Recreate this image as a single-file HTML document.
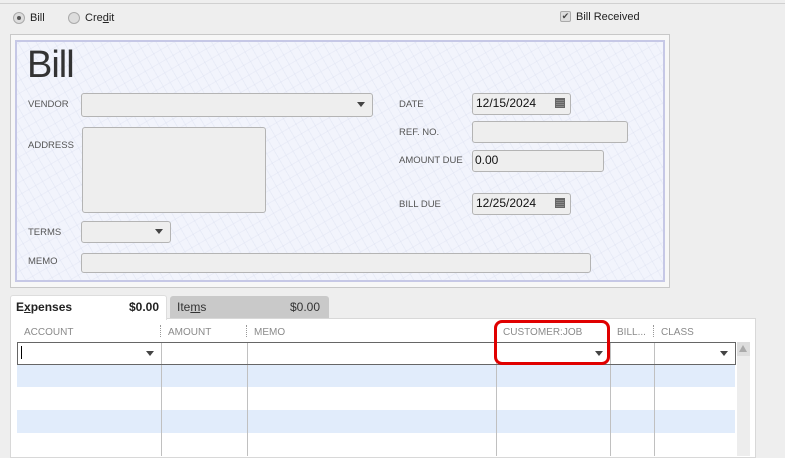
<!DOCTYPE html>
<html><head><meta charset="utf-8"><style>
*{box-sizing:border-box;margin:0;padding:0}
body{width:785px;height:456px;overflow:hidden;background:#eeeeee;font-family:"Liberation Sans",Arial,sans-serif;position:relative;color:#333}
.a{position:absolute}
.lbl{position:absolute;font-size:9.5px;color:#555}
.fld{position:absolute;background:#eeeeee;border:1px solid #b4b4b4;border-radius:3px}
.arr{position:absolute;width:0;height:0;border-left:4.5px solid transparent;border-right:4.5px solid transparent;border-top:5px solid #444}
.cal{position:absolute;width:10px;height:10px;background:#777;border:1px solid #666;background-image:repeating-linear-gradient(0deg,#888 0 1px,#666 1px 2px),repeating-linear-gradient(90deg,#888 0 1px,transparent 1px 2px)}
.hd{position:absolute;top:327px;font-size:10px;color:#8a8a8a}
.dots{position:absolute;top:325px;width:1px;height:12px;border-left:1px dotted #999}
.vl{position:absolute;top:342px;height:114px;width:1px;background:#c0c0c0}
.row{position:absolute;left:17px;width:718px;height:23px}
</style></head><body>
<div class="a" style="left:0;top:3px;width:785px;height:1px;background:#d0d0d0"></div>
<div class="a" style="left:13px;top:12px;width:12px;height:12px;border-radius:50%;background:#ddd;border:1px solid #aaa"></div>
<div class="a" style="left:17px;top:16px;width:4px;height:4px;border-radius:50%;background:#555"></div>
<div class="a" style="left:30px;top:12px;font-size:11px;color:#222">Bill</div>
<div class="a" style="left:68px;top:12px;width:12px;height:12px;border-radius:50%;background:#ddd;border:1px solid #aaa"></div>
<div class="a" style="left:85px;top:12px;font-size:11px;color:#222">Cre<u>d</u>it</div>
<div class="a" style="left:560px;top:11px;width:11px;height:11px;background:#ddd;border:1px solid #aaa;border-radius:2px;font-size:9px;line-height:9px;text-align:center;color:#444">✔</div>
<div class="a" style="left:576px;top:11px;font-size:11px;color:#222">Bill Received</div>
<div class="a" style="left:10px;top:34px;width:660px;height:254px;background:#f7f7f7;border:1px solid #c8c8c8"></div>
<div class="a" style="left:15px;top:40px;width:650px;height:242px;border:2px solid #c6c8e6;background-color:#f2f4fc;background-image:repeating-linear-gradient(60deg,transparent 0 7px,rgba(215,220,238,.35) 7px 8px),repeating-linear-gradient(-30deg,transparent 0 10px,rgba(215,220,238,.3) 10px 11px)"></div>
<div class="a" style="left:27px;top:44px;font-size:38px;color:#333;letter-spacing:-1px">Bill</div>
<div class="lbl" style="left:28px;top:99px">VENDOR</div>
<div class="fld" style="left:81px;top:93px;width:292px;height:24px"></div><div class="arr" style="left:357px;top:102px"></div>
<div class="lbl" style="left:28px;top:140px">ADDRESS</div>
<div class="fld" style="left:82px;top:127px;width:184px;height:86px"></div>
<div class="lbl" style="left:28px;top:227px">TERMS</div>
<div class="fld" style="left:81px;top:221px;width:90px;height:22px"></div><div class="arr" style="left:155px;top:229px"></div>
<div class="lbl" style="left:28px;top:256px">MEMO</div>
<div class="fld" style="left:81px;top:253px;width:510px;height:20px"></div>
<div class="lbl" style="left:399px;top:99px">DATE</div>
<div class="fld" style="left:472px;top:93px;width:99px;height:22px"></div>
<div class="a" style="left:476px;top:96px;font-size:12px;color:#111">12/15/2024</div><div class="cal" style="left:555px;top:98px"></div>
<div class="lbl" style="left:399px;top:127px">REF. NO.</div>
<div class="fld" style="left:472px;top:121px;width:156px;height:22px"></div>
<div class="lbl" style="left:399px;top:155px">AMOUNT DUE</div>
<div class="fld" style="left:472px;top:150px;width:132px;height:22px"></div>
<div class="a" style="left:475px;top:153px;font-size:12px;color:#111">0.00</div>
<div class="lbl" style="left:399px;top:199px">BILL DUE</div>
<div class="fld" style="left:472px;top:193px;width:99px;height:22px"></div>
<div class="a" style="left:476px;top:196px;font-size:12px;color:#111">12/25/2024</div><div class="cal" style="left:555px;top:198px"></div>
<div class="a" style="left:10px;top:318px;width:746px;height:140px;background:#fff;border:1px solid #d8d8d8"></div>
<div class="a" style="left:10px;top:295px;width:157px;height:25px;background:#fff;border:1px solid #ddd;border-bottom:none;border-radius:3px 3px 0 0"></div>
<div class="a" style="left:16px;top:300px;font-size:12px;font-weight:bold;color:#222">E<u>x</u>penses</div>
<div class="a" style="left:129px;top:300px;font-size:12px;font-weight:bold;color:#222">$0.00</div>
<div class="a" style="left:170px;top:296px;width:159px;height:22px;background:#c9c9c9;border-radius:3px 3px 0 0"></div>
<div class="a" style="left:177px;top:300px;font-size:12px;color:#333">Ite<u>m</u>s</div>
<div class="a" style="left:290px;top:300px;font-size:12px;color:#333">$0.00</div>
<div class="hd" style="left:24px">ACCOUNT</div>
<div class="dots" style="left:160px"></div><div class="hd" style="left:168px">AMOUNT</div>
<div class="dots" style="left:246px"></div><div class="hd" style="left:254px">MEMO</div>
<div class="hd" style="left:503px">CUSTOMER:JOB</div>
<div class="hd" style="left:617px">BILL...</div>
<div class="dots" style="left:653px"></div><div class="hd" style="left:661px">CLASS</div>
<div class="row" style="top:364px;background:#e1ecfb"></div>
<div class="row" style="top:410px;background:#e1ecfb"></div>
<div class="vl" style="left:161px"></div><div class="vl" style="left:247px"></div><div class="vl" style="left:496px"></div><div class="vl" style="left:610px"></div><div class="vl" style="left:654px"></div>
<div class="a" style="left:17px;top:342px;width:719px;height:23px;border:1px solid #666;background:transparent"></div>
<div class="a" style="left:21px;top:346px;width:1px;height:13px;background:#000"></div>
<div class="arr" style="left:146px;top:351px"></div>
<div class="arr" style="left:595px;top:351px"></div>
<div class="arr" style="left:720px;top:351px"></div>
<div class="a" style="left:737px;top:342px;width:13px;height:114px;background:#ededed"></div>
<div class="a" style="left:737px;top:342px;width:13px;height:14px;background:#ddd"></div>
<div class="a" style="left:739px;top:345px;width:0;height:0;border-left:4.5px solid transparent;border-right:4.5px solid transparent;border-bottom:7px solid #aaa"></div>
<div class="a" style="left:494px;top:320px;width:116px;height:45px;border:3px solid #e00000;border-radius:8px"></div>
</body></html>
